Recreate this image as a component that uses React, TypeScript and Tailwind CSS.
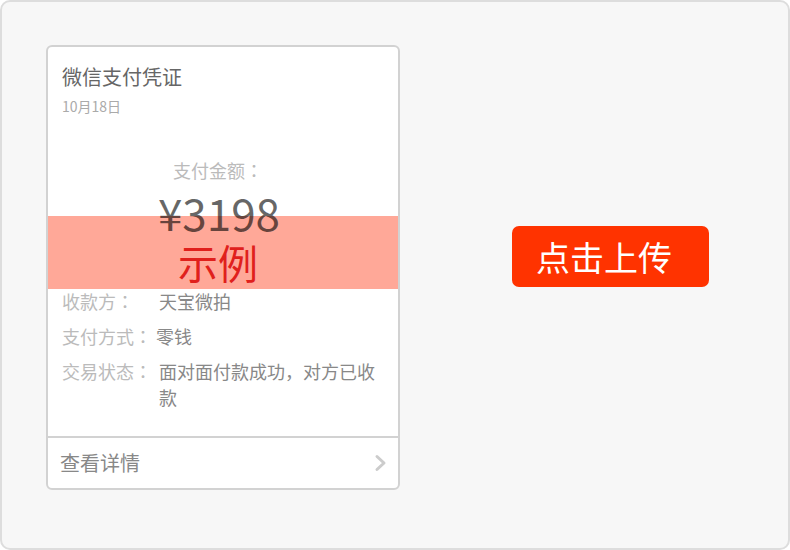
import React from 'react';

const cjk = { fontFamily: '"Noto Sans CJK SC", "Noto Sans", sans-serif' };

// centred full-width colon, as in the reference
function Colon() {
  return <span className="[font-family:'Noto_Sans_CJK_TC',sans-serif]">：</span>;
}

function Row({ label, value, labelWidth }: { label: string; value: string; labelWidth: string }) {
  return (
    <div className="flex text-[18px] leading-[26px]">
      <span className={`${labelWidth} shrink-0 text-[#bbbbbb]`}>
        {label}
        <Colon />
      </span>
      <span className="text-[#888888]">{value}</span>
    </div>
  );
}

export default function App() {
  return (
    <div
      className="w-[790px] h-[550px] bg-[#f7f7f7] border-2 border-[#dddddd] rounded-[10px] flex items-start"
      style={cjk}
    >
      {/* Voucher card */}
      <div className="relative ml-[44px] mt-[43px] w-[354px] h-[445px] bg-white border-2 border-[#d2d2d2] rounded-[6px] flex flex-col">
        <div className="flex-1 flex flex-col px-[14px] pt-[16px]">
          <div className="text-[20px] leading-[28px] text-[#666666]">微信支付凭证</div>
          <div className="mt-[5px] text-[14px] leading-[20px] text-[#aaaaaa]">10月18日</div>

          <div className="mt-[41px] pr-[10px] text-center text-[18px] leading-[26px] text-[#bbbbbb]">
            支付金额
            <Colon />
          </div>
          <div className="relative z-10 mt-[5px] pr-[8px] text-center text-[44px] leading-[48px] text-black/60">¥3198</div>

          <div className="mt-[52px] flex flex-col gap-[9px]">
            <Row label="收款方" value="天宝微拍" labelWidth="w-[97px]" />
            <Row label="支付方式" value="零钱" labelWidth="w-[94px]" />
            <Row label="交易状态" value="面对面付款成功，对方已收款" labelWidth="w-[97px]" />
          </div>
        </div>

        <div className="h-[52px] border-t-2 border-[#d2d2d2] flex items-center justify-between pl-[12px] pr-[10px]">
          <span className="text-[20px] text-[#888888]">查看详情</span>
          <svg width="14" height="18" viewBox="0 0 14 18" fill="none">
            <path d="M3 2.5 L10 9 L3 15.5" stroke="#cccccc" strokeWidth="3" strokeLinecap="round" strokeLinejoin="round" />
          </svg>
        </div>

        {/* sample watermark band */}
        <div className="absolute left-0 right-0 top-[169px] h-[73px] bg-[#ffa898] flex justify-center pt-[22px] pr-[10px]">
          <span className="text-[40px] leading-[48px] text-[#e0201c]">示例</span>
        </div>
      </div>

      <button className="ml-[112px] mt-[224px] w-[197px] h-[61px] bg-[#ff3300] rounded-[7px] text-white text-[34px] text-left pl-[24px] leading-none">
        点击上传
      </button>
    </div>
  );
}
